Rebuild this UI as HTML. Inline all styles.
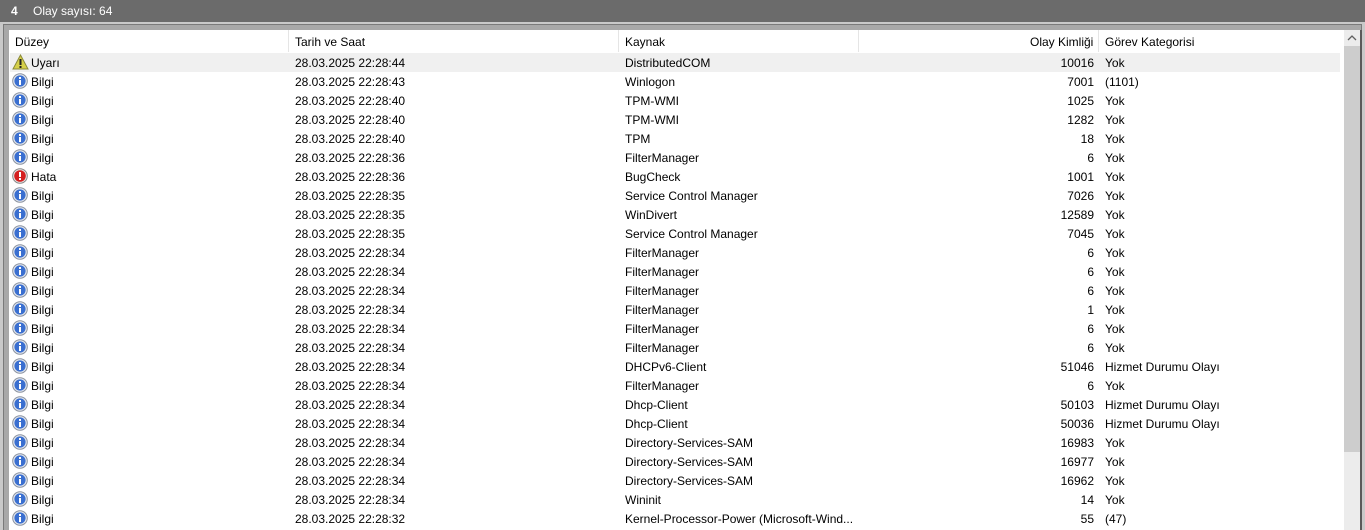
<!DOCTYPE html><html><head><meta charset="utf-8"><style>
*{margin:0;padding:0;box-sizing:border-box}
body{width:1365px;height:530px;overflow:hidden;background:#c9c9c9;font-family:"Liberation Sans",sans-serif;font-size:12px;color:#000;position:relative}
.top{position:absolute;left:0;top:0;width:1365px;height:22px;background:#6b6b6b;color:#fff;font-size:12px;line-height:22px}
.top b{position:absolute;left:11px}
.top span{position:absolute;left:33px}
.frame{position:absolute;left:3px;top:24px;width:1359px;height:506px;border:1px solid #7a7a7a;border-bottom:none;background:#a8a8a8}
.list{position:absolute;left:9px;top:30px;width:1351px;height:500px;background:#fff}
.hdr{position:absolute;top:31px;height:22px;line-height:22px}
.sep{position:absolute;top:30px;height:22px;width:1px;background:#e5e5e5}
.row{position:absolute;left:10px;width:1330px;height:19px;line-height:20px}
.row div{position:absolute;top:0;white-space:nowrap}
.c1{left:21px}.c2{left:285px}.c3{left:615px}.c4{right:246px;text-align:right}.c5{left:1095px}
.sb{position:absolute;left:1344px;top:30px;width:16px;height:500px;background:#ececec}
.th{position:absolute;left:1344px;top:46px;width:16px;height:406px;background:#cdcdcd}
.rb{position:absolute;left:1360px;top:30px;width:2px;height:500px;background:#5a5a5a}
</style></head><body>
<div class="top"><b>4</b><span>Olay sayısı: 64</span></div>
<div class="frame"></div>
<div class="list"></div>
<div class="hdr" style="left:15px">Düzey</div>
<div class="sep" style="left:288px"></div>
<div class="hdr" style="left:295px">Tarih ve Saat</div>
<div class="sep" style="left:618px"></div>
<div class="hdr" style="left:625px">Kaynak</div>
<div class="sep" style="left:858px"></div>
<div class="hdr" style="left:1030px">Olay Kimliği</div>
<div class="sep" style="left:1098px"></div>
<div class="hdr" style="left:1105px">Görev Kategorisi</div>
<div class="sb"></div><div class="th"></div><div class="rb"></div>
<svg style="position:absolute;left:1347px;top:34px" width="10" height="8"><path d="M1 6 L5 2 L9 6" fill="none" stroke="#606060" stroke-width="1.3"/></svg>
<div id="rows"></div>
<script>
const I='<svg style="position:absolute;left:2px;top:1px" width="16" height="16"><circle cx="8" cy="8" r="7.3" fill="#e4e8ee" stroke="#8a92a0"/><circle cx="8" cy="8" r="5.6" fill="#3a6fd0"/><rect x="7" y="7" width="2" height="5" fill="#fff"/><rect x="7" y="4" width="2" height="2" fill="#fff"/></svg>';
const W='<svg style="position:absolute;left:2px;top:1px" width="17" height="16"><path d="M8.5 1 L16 15 L1 15 Z" fill="#d6d04a" stroke="#8a8a3a"/><rect x="7.5" y="5" width="2" height="6" fill="#222"/><rect x="7.5" y="12" width="2" height="2" fill="#222"/></svg>';
const E='<svg style="position:absolute;left:2px;top:1px" width="16" height="16"><circle cx="8" cy="8" r="7.3" fill="#e8e8e8" stroke="#888"/><circle cx="8" cy="8" r="5.8" fill="#d42020"/><rect x="7" y="4" width="2" height="5" fill="#fff"/><rect x="7" y="10" width="2" height="2" fill="#fff"/></svg>';
const d=[["W","Uyarı","44","DistributedCOM","10016","Yok"],["I","Bilgi","43","Winlogon","7001","(1101)"],["I","Bilgi","40","TPM-WMI","1025","Yok"],["I","Bilgi","40","TPM-WMI","1282","Yok"],["I","Bilgi","40","TPM","18","Yok"],["I","Bilgi","36","FilterManager","6","Yok"],["E","Hata","36","BugCheck","1001","Yok"],["I","Bilgi","35","Service Control Manager","7026","Yok"],["I","Bilgi","35","WinDivert","12589","Yok"],["I","Bilgi","35","Service Control Manager","7045","Yok"],["I","Bilgi","34","FilterManager","6","Yok"],["I","Bilgi","34","FilterManager","6","Yok"],["I","Bilgi","34","FilterManager","6","Yok"],["I","Bilgi","34","FilterManager","1","Yok"],["I","Bilgi","34","FilterManager","6","Yok"],["I","Bilgi","34","FilterManager","6","Yok"],["I","Bilgi","34","DHCPv6-Client","51046","Hizmet Durumu Olayı"],["I","Bilgi","34","FilterManager","6","Yok"],["I","Bilgi","34","Dhcp-Client","50103","Hizmet Durumu Olayı"],["I","Bilgi","34","Dhcp-Client","50036","Hizmet Durumu Olayı"],["I","Bilgi","34","Directory-Services-SAM","16983","Yok"],["I","Bilgi","34","Directory-Services-SAM","16977","Yok"],["I","Bilgi","34","Directory-Services-SAM","16962","Yok"],["I","Bilgi","34","Wininit","14","Yok"],["I","Bilgi","32","Kernel-Processor-Power (Microsoft-Wind...","55","(47)"]];
let h='';d.forEach((r,i)=>{const ic=r[0]=="W"?W:r[0]=="E"?E:I;h+=`<div class="row" style="top:${53+i*19}px;${i==0?'background:#f0f0f0':''}">${ic}<div class="c1">${r[1]}</div><div class="c2">28.03.2025 22:28:${r[2]}</div><div class="c3">${r[3]}</div><div class="c4">${r[4]}</div><div class="c5">${r[5]}</div></div>`});
document.getElementById('rows').innerHTML=h;
</script>
</body></html>
